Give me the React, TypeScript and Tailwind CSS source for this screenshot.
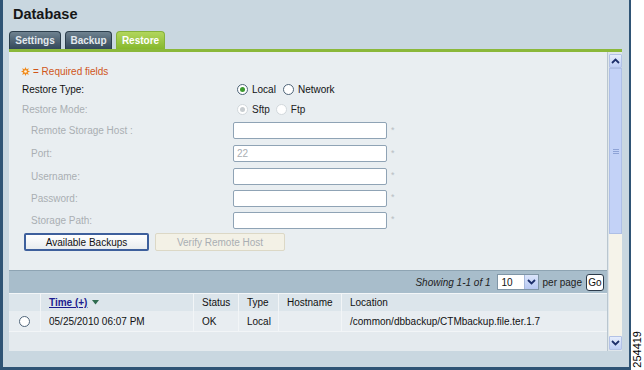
import { ReactNode } from 'react'

function Req() {
  return <span className="ml-[4px] text-[9px] text-[#b8bec4]">*</span>
}

function Radio({ checked, disabled }: { checked?: boolean; disabled?: boolean }) {
  return (
    <span
      className={`flex h-[11px] w-[11px] items-center justify-center rounded-full border bg-white ${
        disabled ? 'border-[#d2d8dc] bg-[#eef1f3]' : 'border-[#4f6579]'
      }`}
    >
      {checked && (
        <span className={`h-[5px] w-[5px] rounded-full ${disabled ? 'bg-[#c8cdd1]' : 'bg-[#3c9a2e]'}`} />
      )}
    </span>
  )
}

function FieldRow({ label, h, value }: { label: string; h: string; value?: string }) {
  return (
    <div className={`flex items-center ${h}`}>
      <span className="w-[224px] pl-[22px] text-[#a9aeb3]">{label}</span>
      <div className="flex h-[17px] w-[154px] items-center rounded-[2px] border border-[#8fa3b5] bg-white px-[3px] text-[#a9aeb3]">
        {value}
      </div>
      <Req />
    </div>
  )
}

function Th({ w, children, last }: { w: string; children?: ReactNode; last?: boolean }) {
  return (
    <div className={`${w} flex h-full items-center pl-[8px] ${last ? '' : 'border-r border-[#f2f5f7]'}`}>{children}</div>
  )
}

function Chevron({ up }: { up?: boolean }) {
  return (
    <svg width="9" height="6" viewBox="0 0 9 6">
      <path
        d={up ? 'M1 5 L4.5 1.5 L8 5' : 'M1 1 L4.5 4.5 L8 1'}
        fill="none"
        stroke="#1d2f6b"
        strokeWidth="1.8"
      />
    </svg>
  )
}

export default function App() {
  return (
    <div className="flex h-[370px] w-[644px] bg-white font-['Liberation_Sans',Arial,sans-serif] text-[10px] text-[#111]">
      <div className="flex h-full w-[631px] flex-col border-b-[3px] border-l-[3px] border-r-2 border-[#2f5475] bg-[#c9d7e0] px-[6px]">
        <div className="h-[31px] pl-[4px] pt-[4px] text-[14.5px] font-bold text-[#161616]">Database</div>

        <div className="flex h-[18px] gap-[4px] font-bold">
          <div className="flex w-[52px] items-center justify-center rounded-t-[4px] border border-b-0 border-[#2c3e4c] bg-gradient-to-b from-[#6f8290] to-[#33485a] text-[#e3e9ee]">
            Settings
          </div>
          <div className="flex w-[47px] items-center justify-center rounded-t-[4px] border border-b-0 border-[#2c3e4c] bg-gradient-to-b from-[#6f8290] to-[#33485a] text-[#e3e9ee]">
            Backup
          </div>
          <div className="flex w-[49px] items-center justify-center rounded-t-[4px] border border-b-0 border-[#86b23a] bg-gradient-to-b from-[#b2d65c] to-[#86b82c] text-white">
            Restore
          </div>
        </div>
        <div className="h-[3px] w-[613px] bg-[#8bb83a]" />

        <div className="flex h-[299px] w-[613px]">
          <div className="flex w-[598px] flex-col bg-[#e9eef1]">
            <div className="flex h-[218px] flex-col pt-[11px] text-[#111]">
              <div className="flex h-[16px] items-center gap-[3px] pl-[12px] text-[#d0561a]">
                <svg width="9" height="9" viewBox="0 0 8 8">
                  <polygon
                    points="4,0 4.9,2 7,1 6,3.1 8,4 6,4.9 7,7 4.9,6 4,8 3.1,6 1,7 2,4.9 0,4 2,3.1 1,1 3.1,2"
                    fill="#f08a1c"
                  />
                  <circle cx="4" cy="4" r="1.2" fill="#fff3d8" />
                </svg>
                <span>= Required fields</span>
              </div>
              <div className="flex h-[20px] items-center">
                <span className="w-[228px] pl-[13px]">Restore Type:</span>
                <div className="flex items-center gap-[4px]">
                  <Radio checked />
                  <span className="mr-[3px]">Local</span>
                  <Radio />
                  <span>Network</span>
                </div>
              </div>
              <div className="flex h-[20px] items-center text-[#a9aeb3]">
                <span className="w-[228px] pl-[13px]">Restore Mode:</span>
                <div className="flex items-center gap-[4px]">
                  <Radio checked disabled />
                  <span className="mr-[2px] text-[#222]">Sftp</span>
                  <Radio disabled />
                  <span className="text-[#222]">Ftp</span>
                </div>
              </div>
              <FieldRow label="Remote Storage Host :" h="h-[23px]" />
              <FieldRow label="Port:" h="h-[23px]" value="22" />
              <FieldRow label="Username:" h="h-[22px]" />
              <FieldRow label="Password:" h="h-[22px]" />
              <FieldRow label="Storage Path:" h="h-[22px]" />
              <div className="mt-[2px] flex h-[18px] gap-[6px] pl-[15px]">
                <button className="h-[18px] w-[125px] rounded-[2px] border-2 border-[#3d5f9c] bg-gradient-to-b from-white to-[#e8ecef] text-[10px] text-[#111]">
                  Available Backups
                </button>
                <button className="h-[18px] w-[130px] rounded-[2px] border border-[#dcd8c6] bg-[#f3f1e6] text-[10px] text-[#a9aeb3]">
                  Verify Remote Host
                </button>
              </div>
            </div>

            <div className="flex h-[23px] items-center justify-end gap-[4px] border-t border-[#8ea4b3] bg-[#a8bdcb] pr-[3px]">
              <span className="mr-[2px] italic text-[#222]">Showing 1-1 of 1</span>
              <div className="flex h-[16px] w-[42px] items-center justify-between border border-[#7f95a6] bg-white pl-[4px]">
                <span>10</span>
                <span className="flex h-full w-[14px] items-center justify-center border-l border-[#a6b8db] bg-gradient-to-b from-[#dbe5fb] to-[#b7c8f2]">
                  <Chevron />
                </span>
              </div>
              <span className="text-[#222]">per page</span>
              <span className="flex h-[17px] w-[18px] items-center justify-center rounded-[3px] border border-[#2b3a4a] bg-white">
                Go
              </span>
            </div>

            <div className="flex h-[18px] border-t border-[#f3f6f8] bg-[#dce5eb]">
              <Th w="w-[32px]" />
              <Th w="w-[153px]">
                <span className="font-bold text-[#1c1c8f] underline">Time (+)</span>
                <svg className="ml-[5px]" width="7" height="5" viewBox="0 0 7 5">
                  <polygon points="0,0 7,0 3.5,4.5" fill="#2e6b4f" />
                </svg>
              </Th>
              <Th w="w-[45px]">Status</Th>
              <Th w="w-[40px]">Type</Th>
              <Th w="w-[63px]">Hostname</Th>
              <Th w="flex-1" last>
                Location
              </Th>
            </div>
            <div className="flex h-[20px] bg-[#e8edf1]">
              <div className="flex w-[32px] items-center justify-center border-r border-[#f2f5f7]">
                <span className="h-[11px] w-[11px] rounded-full border border-[#50657a] bg-white" />
              </div>
              <Th w="w-[153px]">05/25/2010 06:07 PM</Th>
              <Th w="w-[45px]">OK</Th>
              <Th w="w-[40px]">Local</Th>
              <Th w="w-[63px]" />
              <Th w="flex-1" last>
                /common/dbbackup/CTMbackup.file.ter.1.7
              </Th>
            </div>
            <div className="flex-1 border-t border-[#f2f5f7] bg-[#e4eaee]" />
          </div>

          <div className="flex w-[15px] flex-col border-l border-[#b9c6cf] bg-[#dfe6eb] pb-[1px] pl-[1px] pt-[2px]">
            <div className="flex h-[14px] items-center justify-center rounded-[1px] border border-[#b3c2e6] bg-gradient-to-b from-[#e6edfc] to-[#bfcff6]">
              <Chevron up />
            </div>
            <div className="flex h-[166px] flex-col items-center border border-[#aebfe6] bg-[#c3d2f7] pt-[80px]">
              <span className="h-[1px] w-[6px] bg-[#8ea3d6]" />
              <span className="mt-[1px] h-[1px] w-[6px] bg-[#8ea3d6]" />
              <span className="mt-[1px] h-[1px] w-[6px] bg-[#8ea3d6]" />
            </div>
            <div className="flex-1 bg-[#f5f3ea]" />
            <div className="flex h-[14px] items-center justify-center rounded-[1px] border border-[#b3c2e6] bg-gradient-to-b from-[#e6edfc] to-[#bfcff6]">
              <Chevron />
            </div>
          </div>
        </div>
      </div>

      <div className="flex flex-1 flex-col justify-end pb-[2px]">
        <span className="rotate-180 pr-[1px] text-[11px] leading-none text-black [writing-mode:vertical-rl]">
          254419
        </span>
      </div>
    </div>
  )
}
